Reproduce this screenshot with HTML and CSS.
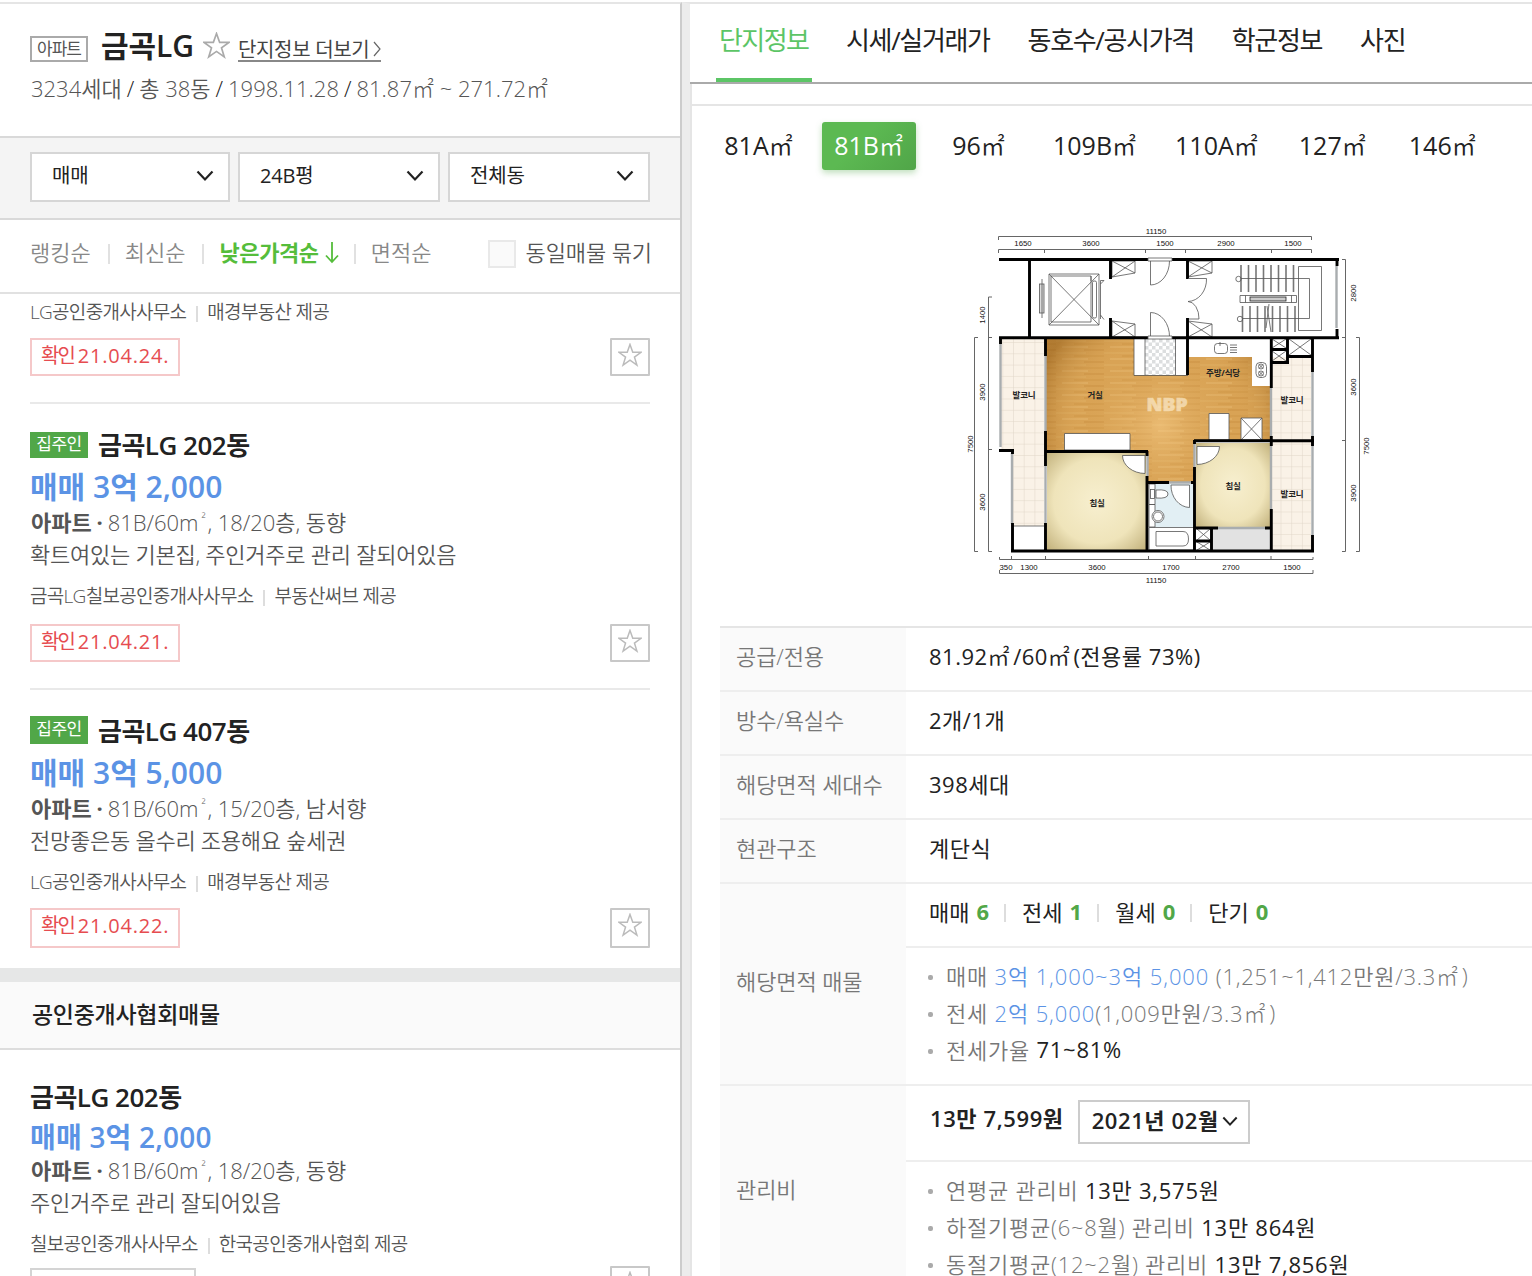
FILE: index.html
```html
<!DOCTYPE html>
<html lang="ko">
<head>
    <meta charset="UTF-8">
    <meta name="viewport" content="width=device-width, initial-scale=1.0">
    <title>금곡LG 단지정보</title>
    <link rel="stylesheet" href="styles.css">
</head>
<body>
    <svg class="defs" width="0" height="0">
        <symbol id="star" viewBox="0 0 26 26">
            <path d="M13 1.5 L16 10 H25 L17.8 15.2 L20.5 24 L13 18.7 L5.5 24 L8.2 15.2 L1 10 H10 Z" fill="none" stroke="currentColor" stroke-width="1.6"/>
        </symbol>
        <symbol id="arrow" viewBox="0 0 18 12">
            <path d="M1.5 1.5 L9 9.5 L16.5 1.5" fill="none" stroke="currentColor" stroke-width="2.2"/>
        </symbol>
    </svg>
    <div class="wrap">
        <!-- 매물 목록 -->
        <div class="list-panel">
            <div class="complex">
                <div class="complex-title">
                    <span class="type">아파트</span>
                    <h1>금곡LG</h1>
                    <svg class="star"><use href="#star"/></svg>
                    <a class="more">단지정보 더보기<svg width="8" height="16" viewBox="0 0 8 16"><path d="M1 1 L7 8 L1 15" fill="none" stroke="#666" stroke-width="1.2"/></svg></a>
                </div>
                <p class="complex-info">3234세대<i>/</i>총 38동<i>/</i>1998.11.28<i>/</i>81.87<small>㎡</small> ~ 271.72<small>㎡</small></p>
            </div>
            <div class="filter">
                <div class="select first">매매<svg width="18" height="12"><use href="#arrow"/></svg></div>
                <div class="select">24B평<svg width="18" height="12"><use href="#arrow"/></svg></div>
                <div class="select">전체동<svg width="18" height="12"><use href="#arrow"/></svg></div>
            </div>
            <div class="sort">
                <span>랭킹순</span><b></b>
                <span>최신순</span><b></b>
                <span class="on">낮은가격순<svg width="14" height="22" viewBox="0 0 14 22"><path d="M7 0 V20 M1 13.5 L7 20 L13 13.5" fill="none" stroke="#55bd3b" stroke-width="1.8"/></svg></span><b></b>
                <span>면적순</span>
                <label class="same"><em></em>동일매물 묶기</label>
            </div>

            <div class="item cut">
                <div class="agent">LG공인중개사사무소<b></b>매경부동산 제공</div>
                <div class="foot"><span class="check">확인<i>21.04.24.</i></span><span class="fav"><svg><use href="#star"/></svg></span></div>
            </div>
            <div class="item">
                <div class="name"><span class="owner">집주인</span>금곡LG 202동</div>
                <div class="price">매매 3억 2,000</div>
                <div class="spec"><strong>아파트</strong><u>·</u>81B/60m<sup>²</sup>, 18/20층, 동향</div>
                <div class="desc">확트여있는 기본집, 주인거주로 관리 잘되어있음</div>
                <div class="agent">금곡LG칠보공인중개사사무소<b></b>부동산써브 제공</div>
                <div class="foot"><span class="check">확인<i>21.04.21.</i></span><span class="fav"><svg><use href="#star"/></svg></span></div>
            </div>
            <div class="item last">
                <div class="name"><span class="owner tall">집주인</span>금곡LG 407동</div>
                <div class="price">매매 3억 5,000</div>
                <div class="spec"><strong>아파트</strong><u>·</u>81B/60m<sup>²</sup>, 15/20층, 남서향</div>
                <div class="desc">전망좋은동 올수리 조용해요 숲세권</div>
                <div class="agent">LG공인중개사사무소<b></b>매경부동산 제공</div>
                <div class="foot"><span class="check">확인<i>21.04.22.</i></span><span class="fav"><svg><use href="#star"/></svg></span></div>
            </div>
            <h2 class="group">공인중개사협회매물</h2>
            <div class="item assoc">
                <div class="name">금곡LG 202동</div>
                <div class="price">매매 3억 2,000</div>
                <div class="spec"><strong>아파트</strong><u>·</u>81B/60m<sup>²</sup>, 18/20층, 동향</div>
                <div class="desc">주인거주로 관리 잘되어있음</div>
                <div class="agent">칠보공인중개사사무소<b></b>한국공인중개사협회 제공</div>
                <div class="foot"><span class="check gray"></span><span class="fav"><svg><use href="#star"/></svg></span></div>
            </div>
        </div>

        <!-- 단지 상세 -->
        <div class="detail-panel">
            <div class="tabs">
                <a class="on">단지정보</a>
                <a>시세/실거래가</a>
                <a>동호수/공시가격</a>
                <a>학군정보</a>
                <a>사진</a>
            </div>
            <div class="detail">
                <div class="sizes">
                    <a>81A<small>㎡</small></a>
                    <a class="on">81B<small>㎡</small></a>
                    <a>96<small>㎡</small></a>
                    <a>109B<small>㎡</small></a>
                    <a>110A<small>㎡</small></a>
                    <a>127<small>㎡</small></a>
                    <a>146<small>㎡</small></a>
                </div>

                <svg class="plan" width="420" height="370" viewBox="0 0 420 370">
                    <defs>
                        <pattern id="wood" width="48" height="12" patternUnits="userSpaceOnUse">
                            <rect width="48" height="12" fill="#d9a355"/>
                            <rect y="0" width="30" height="2" fill="#dca95c"/>
                            <rect x="18" y="3" width="30" height="2" fill="#d49d4e"/>
                            <rect x="6" y="6" width="26" height="2" fill="#dfad62"/>
                            <rect x="28" y="9" width="20" height="2" fill="#d29a4c"/>
                        </pattern>
                        <radialGradient id="woodShade" gradientUnits="userSpaceOnUse" cx="200" cy="205" r="130">
                            <stop offset="0" stop-color="#ffd795" stop-opacity=".45"/>
                            <stop offset=".6" stop-color="#d9a355" stop-opacity="0"/>
                            <stop offset="1" stop-color="#8a5410" stop-opacity=".5"/>
                        </radialGradient>
                        <radialGradient id="room" r=".72">
                            <stop offset="0" stop-color="#f7efcf"/>
                            <stop offset=".6" stop-color="#efe4ba"/>
                            <stop offset="1" stop-color="#bfae78"/>
                        </radialGradient>
                        <pattern id="tile" x="53" y="122" width="10.7" height="11.3" patternUnits="userSpaceOnUse">
                            <rect width="10.7" height="11.3" fill="#faf2e7"/>
                            <path d="M0 0 H10.7 M0 0 V11.3" stroke="#e0d6c8" stroke-width="1"/>
                        </pattern>
                        <pattern id="checker" x="185" y="119" width="7" height="7" patternUnits="userSpaceOnUse">
                            <rect width="7" height="7" fill="#fff"/>
                            <path d="M0 0 h3.5 v3.5 h-3.5 z M3.5 3.5 h3.5 v3.5 h-3.5 z" fill="#dcdedf"/>
                        </pattern>
                    </defs>

                    <!-- 치수선 -->
                    <g class="dim">
                        <path d="M38.5 20 V16.5 H351.5 V20 M38.5 33 V29.5 H351.5 V33 M84.5 29 V33 M185.5 29 V33 M225.5 29 V33 M311.5 29 V33"/>
                        <path d="M39.5 337 V339.5 H353 V337 M51.5 336 V340 M85.5 336 V340 M188.5 336 V340 M235.5 336 V340 M311 336 V340 M39.5 350 V353.5 H353 V350"/>
                        <path d="M32 77 H28.5 V331.5 H32 M28 117.5 H32 M28 229.5 H32 M18 117.5 H14.5 V331.5 H18"/>
                        <path d="M382 39.5 H385.5 V331.5 H382 M382 117.5 H386 M382 220.5 H386 M396 117.5 H399.5 V331.5 H396"/>
                    </g>
                    <g class="num">
                        <text x="196" y="14">11150</text>
                        <text x="63" y="26">1650</text>
                        <text x="131" y="26">3600</text>
                        <text x="205" y="26">1500</text>
                        <text x="266" y="26">2900</text>
                        <text x="333" y="26">1500</text>
                        <text x="46" y="350">350</text>
                        <text x="69" y="350">1300</text>
                        <text x="137" y="350">3600</text>
                        <text x="211" y="350">1700</text>
                        <text x="271" y="350">2700</text>
                        <text x="332" y="350">1500</text>
                        <text x="196" y="363">11150</text>
                        <text transform="translate(25 95) rotate(-90)">1400</text>
                        <text transform="translate(25 172) rotate(-90)">3900</text>
                        <text transform="translate(25 282) rotate(-90)">3600</text>
                        <text transform="translate(13 224) rotate(-90)">7500</text>
                        <text transform="translate(396 73) rotate(-90)">2800</text>
                        <text transform="translate(396 167) rotate(-90)">3600</text>
                        <text transform="translate(396 273) rotate(-90)">3900</text>
                        <text transform="translate(409 226) rotate(-90)">7500</text>
                    </g>

                    <!-- 바닥 -->
                    <path d="M86 118 H174 V155 H228 V137 H292 V166 H311 V221 H234 V263 H188 V231 H86 Z" fill="url(#wood)"/>
                    <path d="M86 118 H174 V155 H228 V137 H292 V166 H311 V221 H234 V263 H188 V231 H86 Z" fill="url(#woodShade)"/>
                    <path d="M41 119 H84 V306 H53 V230 H41 Z" fill="url(#tile)"/>
                    <path d="M312 137 H351 V330 H312 Z" fill="url(#tile)"/>
                    <rect x="87" y="232" width="99" height="98" fill="url(#room)"/>
                    <rect x="236" y="223" width="74" height="84" fill="url(#room)"/>
                    <rect x="189" y="264" width="45" height="43" fill="#e2eff4"/>
                    <rect x="253" y="309" width="57" height="21" fill="#e2e2e2"/>
                    <rect x="185" y="119" width="31" height="36" fill="url(#checker)"/>

                    <g class="thin">
                        <path d="M174 119 V155.5 H228 M185 119 V155 M215.5 119 V155 M53 306 H84"/>
                        <!-- 엘리베이터 -->
                        <path d="M89 54 H139 V105 H89 Z M91 56 H131 V102 H91 Z M89 54 L139 105 M139 54 L89 105 M131 61 V56 M140.5 99 V60.5 H144 L140.5 64 M140.5 95 L144 99.5"/>
                        <rect x="132.5" y="61" width="4" height="37" rx="1.5" fill="#fff"/>
                        <rect x="79.5" y="64" width="4.5" height="29" fill="#ddd"/>
                        <path d="M82 59 V98"/>
                        <path d="M152 41 H175 V53 L152 57 Z M152 41 L175 53 M175 41 L152 57 M152 101 L175 104 V117 H152 Z M152 101 L175 117 M175 104 L152 117"/>
                        <path d="M228 41 H252 V53 L228 57 Z M228 41 L252 53 M252 41 L228 57 M228 101 L252 104 V117 H228 Z M228 101 L252 117 M252 104 L228 117"/>
                        <!-- 계단 -->
                        <path class="tread" d="M281 45 V72 M288.5 45 V72 M296 45 V72 M303.5 45 V72 M311 45 V72 M318.5 45 V72 M326 45 V72 M333.5 45 V72"/>
                        <path class="tread" d="M282.5 86 V112 M290 86 V112 M297.5 86 V112 M305 86 V112 M312.5 86 V112 M320 86 V112 M327.5 86 V112 M335 86 V112"/>
                        <path d="M338.5 46.5 H361.5 V110.5 H338.5 Z M281 58.5 H349.5 V98.5 H283 M307 86 L311 112 M309 84 L306 108"/>
                        <circle cx="278.5" cy="59" r="2.7"/>
                        <circle cx="280" cy="99" r="2.7"/>
                        <path d="M280 75.5 H336.5 V82.5 H280 Z M285.5 75.5 V82.5 M331.5 75.5 V82.5"/>
                        <rect x="290" y="77" width="36" height="4" fill="#ccc" stroke="#222"/>
                        <!-- 주방 -->
                        <rect x="254.5" y="123.5" width="13" height="10" rx="3"/>
                        <path d="M260 122 V126 M270 125 H277 M270 127.5 H277 M270 130 H277 M270 132.5 H277"/>
                        <rect x="296" y="142.5" width="10.5" height="15" rx="4"/>
                        <circle cx="301" cy="146.5" r="2.5"/><circle cx="301" cy="153.5" r="2.5"/>
                        <path d="M299 144.5 l4 4 M303 144.5 l-4 4 M299 151.5 l4 4 M303 151.5 l-4 4"/>
                        <!-- 가구 -->
                        <path d="M104.5 213.5 H170 V230 H104.5 Z M249 193.5 H269 V220 H249 Z M281 198 H302 V220 H281 Z" fill="#fff"/>
                        <path d="M281 198 L302 220 M302 198 L281 220"/>
                        <path d="M185 235.5 H162.5 A23 18 0 0 0 185 253.5 Z M237 226.5 H259.5 A23 18 0 0 1 237 244.5 Z" fill="#fff"/>
                        <!-- 욕실 -->
                        <path d="M189 264 H195 V284.5 H189 Z M189 284.5 H195 V307 H189 Z M189 307.5 H234 V330 H189 Z" fill="#fff"/>
                        <rect x="190.5" y="269.5" width="4" height="9" fill="#fff"/>
                        <path d="M196 270 Q208 269 208 274 Q208 279 196 278 Z" fill="#fff"/>
                        <circle cx="198" cy="296.5" r="6" fill="#fff"/><circle cx="198" cy="296.5" r="4.5"/>
                        <path d="M196 311.5 H223 Q228.5 311.5 228.5 319 Q228.5 326 223 326 H196 Z"/>
                        <path d="M229.5 265 V287.5 A19 22 0 0 1 211 265 Z" fill="#fff"/>
                        <!-- 덕트 -->
                        <path d="M312 119 L326 128 M326 119 L312 128 M312 131 L326 141 M326 131 L312 141 M329 119 L351 135 M351 119 L329 135"/>
                        <path d="M237 309 L250 320 M250 309 L237 320 M237 322 L250 330 M250 322 L237 330"/>
                    </g>

                    <!-- 창 -->
                    <path class="window" d="M40.5 123 V227 M52 233 V304 M85.5 135 V211 M85.5 246 V303 M376.5 46 V108 M311 168 V217 M311 226 V289 M352.5 152 V216 M352.5 226 V315 M258 308 H305 M187.5 234 V256 M234.5 224 V247 M209 262.5 H231"/>

                    <!-- 벽 -->
                    <g class="wall">
                        <path d="M39 39.5 H188 M212 39.5 H379 M39 117.7 H188 M212 117.7 H379 M69.5 40 V117 M150.5 40 V59 M150.5 98 V118 M227.5 40 V59 M227.5 98 V155 M377 40 V46 M377 109 V118"/>
                        <path d="M40.5 118 V124 M39 230.5 H54 M52.5 230 V234 M52.5 303 V332 M51 331 H354 M85.5 118 V136 M85.5 211 V246 M85.5 303 V331"/>
                        <path d="M85 231.5 H188 M187 231 V236 M187 256 V331 M187 262.5 H209 M231 262.5 H235 M234.5 220 V224 M234.5 247 V331 M234 220.8 H354"/>
                        <path d="M311.3 118 V168 M311.3 216 V226 M311.3 289 V331 M327.5 118 V144 M311 129.5 H328 M311 142.5 H329 M327 136.5 H353 M352.5 118 V152 M352.5 216 V226 M352.5 315 V332"/>
                        <path d="M235 308 H258 M305 308 H312 M235 321 H251 M251.5 308 V331"/>
                    </g>

                    <!-- 현관문 -->
                    <g class="thin">
                        <path d="M190.5 41 V65 A19 24 0 0 0 209.5 41 M190.5 117 V92.5 A19 24 0 0 1 209.5 117"/>
                        <path d="M188 38 H212 V41 H188 Z M188 116 H212 V119 H188 Z" fill="#fff"/>
                        <path d="M228 58.5 H246.5 A19 22 0 0 1 228 81.5 A11 17 0 0 1 239 99 H229"/>
                    </g>

                    <g class="room-name">
                        <text x="64" y="178">발코니</text>
                        <text x="135" y="178">거실</text>
                        <text x="263" y="155.5">주방/식당</text>
                        <text x="332" y="183">발코니</text>
                        <text x="137" y="286">침실</text>
                        <text x="273" y="269">침실</text>
                        <text x="332" y="277">발코니</text>
                    </g>
                    <text class="mark" x="207" y="191" textLength="41" lengthAdjust="spacingAndGlyphs">NBP</text>
                </svg>

                <div class="table">
                    <div class="th">공급/전용</div>
                    <div class="td">81.92<small>㎡</small>/60<small>㎡</small>(전용률 73%)</div>
                    <div class="th">방수/욕실수</div>
                    <div class="td">2개/1개</div>
                    <div class="th">해당면적 세대수</div>
                    <div class="td">398세대</div>
                    <div class="th">현관구조</div>
                    <div class="td">계단식</div>
                    <div class="th">해당면적 매물</div>
                    <div class="group-td">
                        <div class="counts">
                            <span>매매 <b>6</b></span>
                            <span>전세 <b>1</b></span>
                            <span>월세 <b>0</b></span>
                            <span>단기 <b>0</b></span>
                        </div>
                        <ul>
                            <li>매매 <em>3억 1,000~3억 5,000</em> (1,251~1,412만원/3.3<small>㎡</small>)</li>
                            <li>전세 <em>2억 5,000</em>(1,009만원/3.3<small>㎡</small>)</li>
                            <li>전세가율 <strong>71~81%</strong></li>
                        </ul>
                    </div>
                    <div class="th">관리비</div>
                    <div class="group-td">
                        <div class="fee">13만 7,599원<span class="month">2021년 02월<svg width="16" height="11"><use href="#arrow"/></svg></span></div>
                        <ul>
                            <li>연평균 관리비 <strong>13만 3,575원</strong></li>
                            <li>하절기평균(6~8월) 관리비 <strong>13만 864원</strong></li>
                            <li>동절기평균(12~2월) 관리비 <strong>13만 7,856원</strong></li>
                        </ul>
                    </div>
                </div>
            </div>
        </div>
    </div>
</body>
</html>
```
FILE: styles.css
```css
* {
    box-sizing: border-box;
}
body {
    margin: 0;
    background: #fff;
    color: #222;
    font-family: 'Open Sans', 'Noto Sans CJK KR', sans-serif;
    font-size: 22px;
    overflow: hidden;
}
h1, h2, p, ul {
    margin: 0;
    padding: 0;
}
i, em, u {
    font-style: normal;
    text-decoration: none;
}
small {
    font-size: 1em;
    font-weight: 300;
}
.defs {
    display: block;
}
.wrap {
    display: flex;
    height: 1276px;
    padding-top: 2px;
    overflow: hidden;
}

/* 왼쪽 매물 목록 */
.list-panel {
    flex: none;
    width: 682px;
    height: 1274px;
    border-top: 2px solid #e5e5e5;
    border-right: 2px solid #ccc;
    overflow: hidden;
}
.complex {
    height: 132px;
    padding: 25px 30px 0;
}
.complex-title {
    display: flex;
    align-items: center;
    height: 34px;
}
.type {
    width: 58px;
    height: 26px;
    margin-top: 6px;
    border: 2px solid #aaa;
    color: #555;
    font-size: 17px;
    line-height: 21px;
    letter-spacing: -1px;
    text-align: center;
}
h1 {
    margin-left: 13px;
    font-size: 30px;
    font-weight: 600;
    line-height: 34px;
    letter-spacing: -0.1px;
}
.star {
    width: 27px;
    height: 27px;
    margin: -2px 0 0 9px;
    color: #aaa;
}
.more {
    display: flex;
    align-items: center;
    gap: 4px;
    height: 25px;
    margin: 7px 0 0 8px;
    border-bottom: 2px solid #888;
    color: #444;
    font-size: 20px;
    letter-spacing: -0.3px;
}
.complex-info {
    margin: 9px 0 0 1px;
    color: #555;
    font-weight: 350;
    line-height: 32px;
    white-space: nowrap;
}
.complex-info i {
    margin: 0 5px;
    color: #222;
}
.filter {
    display: flex;
    gap: 8px;
    height: 84px;
    padding: 14px 30px 0;
    background: #f4f4f4;
    border-top: 2px solid #d9d9d9;
    border-bottom: 2px solid #d9d9d9;
}
.select {
    display: flex;
    align-items: center;
    justify-content: space-between;
    width: 202px;
    height: 50px;
    padding: 0 14px 5px 20px;
    background: #fff;
    border: 2px solid #d6d6d6;
    font-size: 20px;
    letter-spacing: -0.2px;
}
.select svg {
    margin-top: 3px;
}
.select.first {
    width: 200px;
}
.sort {
    display: flex;
    align-items: center;
    height: 74px;
    padding: 0 28px 10px 30px;
    border-bottom: 2px solid #e1e1e1;
    color: #888;
    font-weight: 350;
}
.sort b {
    width: 2px;
    height: 20px;
    margin: 5px 16px 0 17px;
    background: #e1e1e1;
}
.sort span + b + span {
    margin-left: -1px;
}
.sort .on {
    display: flex;
    align-items: center;
    gap: 6px;
    margin-right: -2px;
    color: #55bd3b;
    font-weight: 700;
    letter-spacing: -0.4px;
}
.sort .on svg {
    margin-top: 4px;
}
.same {
    display: flex;
    align-items: center;
    gap: 10px;
    margin-left: auto;
    color: #555;
    letter-spacing: -0.1px;
}
.same em {
    width: 28px;
    height: 28px;
    margin-top: 5px;
    background: #fafafa;
    border: 2px solid #e9e9e9;
}

.item {
    height: 286px;
    margin: 0 30px;
    padding-top: 26px;
    border-bottom: 2px solid #e9e9e9;
    white-space: nowrap;
}
.item.cut {
    height: 110px;
    padding-top: 6px;
}
.item.cut .agent {
    margin-top: 0;
}
.item.cut .foot {
    margin-top: 14px;
}
.item.last {
    height: 278px;
    border-bottom: 0;
}
.item.last .foot {
    height: 40px;
    margin-top: 14px;
}
.name {
    display: flex;
    align-items: center;
    height: 27px;
    font-size: 26px;
    font-weight: 600;
    letter-spacing: -0.5px;
}
.owner {
    width: 58px;
    height: 26px;
    margin: 2px 10px 0 0;
    background: #51a748;
    color: #fff;
    font-size: 17px;
    font-weight: 400;
    line-height: 24px;
    letter-spacing: -0.5px;
    text-align: center;
}
.owner.tall {
    height: 28px;
    margin-top: 0;
    line-height: 26px;
}
.price {
    margin-top: 12px;
    color: #5b93e5;
    font-size: 30px;
    font-weight: 600;
    line-height: 36px;
}
.spec, .desc {
    color: #555;
    font-weight: 350;
    line-height: 32px;
    letter-spacing: -0.25px;
}
.spec {
    margin: 1px 0 0 1px;
    letter-spacing: -0.05px;
}
.spec strong {
    font-weight: 600;
}
.spec u {
    margin: 0 5px;
    font-weight: 700;
}
.spec sup {
    margin: 0 2px 0 3px;
    font-size: 12px;
    line-height: 0;
}
.agent {
    display: flex;
    align-items: center;
    margin-top: 14px;
    color: #555;
    font-size: 19px;
    font-weight: 350;
    line-height: 24px;
    letter-spacing: -0.7px;
}
.agent b {
    width: 2px;
    height: 16px;
    margin: 4px 9px 0 10px;
    background: #ddd;
}
.foot {
    display: flex;
    justify-content: space-between;
    height: 38px;
    margin-top: 16px;
}
.check {
    width: 150px;
    padding-left: 9px;
    border: 2px solid #f5c8c9;
    color: #e64c50;
    font-size: 20px;
    line-height: 32px;
    letter-spacing: -2px;
}
.check i {
    margin-left: 4px;
    font-weight: 500;
    letter-spacing: 0.8px;
}
.check.gray {
    width: 166px;
    margin-top: 2px;
    border-color: #d4d4d4;
}
.fav {
    display: flex;
    justify-content: center;
    width: 40px;
    padding-top: 3px;
    border: 2px solid #c8c8c8;
    border-radius: 1px;
    color: #bbb;
}
.fav svg {
    width: 24px;
    height: 24px;
}
.group {
    height: 82px;
    padding-left: 32px;
    background: #fafafa;
    border-top: 14px solid #e6e7e7;
    border-bottom: 2px solid #ddd;
    font-size: 23px;
    font-weight: 500;
    line-height: 64px;
    letter-spacing: -0.3px;
}
.item.assoc {
    padding-top: 32px;
}
.assoc .price {
    margin-top: 10px;
    font-size: 28px;
    line-height: 36px;
    letter-spacing: 0.2px;
}
.assoc .spec {
    margin-top: -1px;
}
.assoc .foot {
    margin-top: 10px;
}

/* 오른쪽 상세 */
.detail-panel {
    flex: none;
    width: 850px;
    height: 1274px;
    border-top: 2px solid #e5e5e5;
    border-left: 8px solid #ececec;
    overflow: hidden;
}
.tabs {
    display: flex;
    gap: 30px;
    height: 80px;
    padding-left: 26px;
    border-bottom: 2px solid #aaa;
}
.tabs a {
    height: 78px;
    padding: 0 4px;
    font-size: 26px;
    line-height: 72px;
    letter-spacing: -1.35px;
    white-space: nowrap;
}
.tabs .on {
    width: 96px;
    padding-left: 3px;
    border-bottom: 4px solid #5cc566;
    color: #5cc566;
    letter-spacing: -1.6px;
}
.detail {
    height: 1192px;
    padding-top: 20px;
    border-left: 2px solid #e5e5e5;
}
.sizes {
    display: flex;
    gap: 16px;
    height: 68px;
    padding: 16px 0 0 20px;
    border-top: 2px solid #e5e5e5;
}
.sizes a {
    min-width: 94px;
    height: 48px;
    padding: 0 12px 0 11px;
    border-radius: 3px;
    font-size: 25px;
    line-height: 46px;
    text-align: center;
    white-space: nowrap;
}
.sizes .on {
    background: linear-gradient(135deg, #5cb952 40%, #50a548);
    box-shadow: 0 3px 6px rgba(80, 165, 72, 0.35);
    color: #fff;
}
.sizes small {
    font-size: 24px;
    font-weight: 350;
}
.plan {
    display: block;
    margin: 48px 0 36px 268px;
}
.dim path {
    fill: none;
    stroke: #666;
}
.num text {
    font-family: 'Liberation Sans', sans-serif;
    font-size: 7.8px;
    text-anchor: middle;
    fill: #111;
}
.thin {
    fill: none;
    stroke: #555;
    stroke-width: 0.8;
}
.tread {
    stroke: #777;
    stroke-width: 1.6;
}
.window {
    fill: none;
    stroke: #a9adaf;
    stroke-width: 2.4;
}
.wall path {
    fill: none;
    stroke: #000;
    stroke-width: 2.9;
}
.room-name text {
    font-size: 8.5px;
    font-weight: 700;
    letter-spacing: -0.2px;
    text-anchor: middle;
    fill: #222;
}
.mark {
    font-size: 18px;
    font-weight: 800;
    text-anchor: middle;
    fill: #fff3da;
    stroke: #fff3da;
    stroke-width: 0.6;
    opacity: 0.6;
}

.table {
    display: grid;
    grid-template-columns: 186px 1fr;
    margin-left: 28px;
    border-top: 2px solid #e5e5e5;
    white-space: nowrap;
}
.th, .td, .group-td {
    border-bottom: 2px solid #eee;
}
.th {
    display: flex;
    align-items: center;
    padding: 0 0 9px 16px;
    background: #fafafa;
    color: #777;
    font-weight: 350;
    letter-spacing: -0.1px;
}
.td {
    height: 64px;
    padding-left: 23px;
    line-height: 56px;
    letter-spacing: 0.5px;
}
.td small {
    margin-right: 3px;
    font-weight: 350;
}
.counts {
    display: flex;
    height: 64px;
    padding: 0 0 8px 23px;
    border-bottom: 2px solid #eee;
}
.counts span {
    display: flex;
    align-items: center;
    gap: 7px;
}
.counts b {
    color: #51a748;
    font-weight: 700;
}
.counts span + span::before {
    content: '';
    width: 2px;
    height: 18px;
    margin: 4px 9px 0 15px;
    background: #ddd;
}
ul {
    height: 136px;
    padding: 8px 0 0 22px;
    list-style: none;
}
li {
    display: flex;
    align-items: center;
    height: 37px;
    color: #777;
    font-weight: 350;
    letter-spacing: 0.75px;
    white-space: pre;
}
li::before {
    content: '';
    width: 5px;
    height: 5px;
    margin: 5px 13px 0 0;
    border-radius: 2px;
    background: #aaa;
}
li em {
    color: #5b93e5;
    letter-spacing: 0.9px;
}
li strong {
    color: #222;
    font-weight: 400;
}
li small {
    margin-right: 3px;
    font-weight: 300;
}
.fee {
    display: flex;
    align-items: center;
    height: 76px;
    padding: 0 0 12px 24px;
    border-bottom: 2px solid #eee;
    font-weight: 600;
    letter-spacing: 0.6px;
}
.month {
    display: flex;
    align-items: center;
    justify-content: space-between;
    width: 172px;
    height: 44px;
    margin: 10px 0 0 14px;
    padding: 0 10px 6px 12px;
    border: 2px solid #ccc;
}
.month svg {
    flex: none;
    margin-top: 5px;
}
```
